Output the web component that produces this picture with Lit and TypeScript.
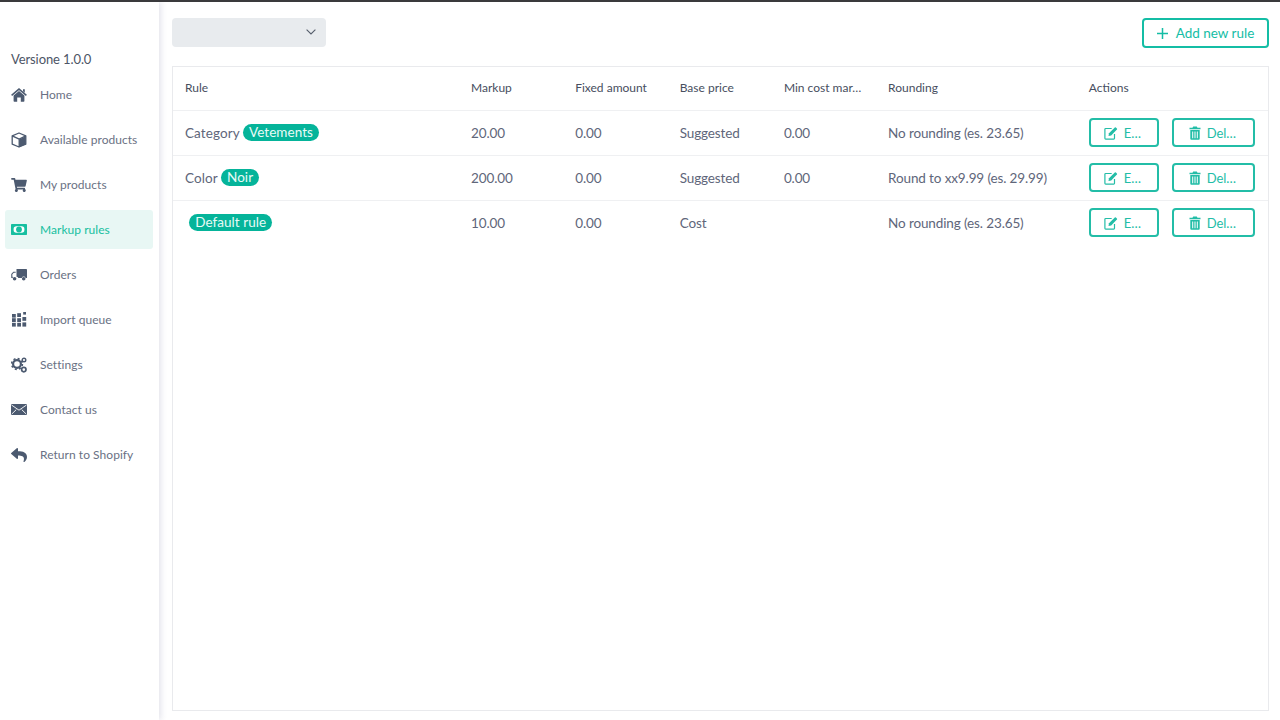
import { LitElement, html, css, svg } from "lit";
import { customElement } from "lit/decorators.js";

const icons: Record<string, unknown> = {
  home: svg`<svg viewBox="0 0 16 14" width="16" height="14"><path d="M.6 7.4 8 1.100l7.400 6.300" fill="none" stroke="currentColor" stroke-width="1.500"/><path d="M12 1.200h1.800v3.600L12 3.300zM2.600 7.600 8 3l5.400 4.600V13a.7.7 0 0 1-.7.700H9.800V9.600H6.200v4.100H3.300a.7.7 0 0 1-.7-.7z" fill="currentColor"/></svg>`,
  cube: svg`<svg viewBox="0 0 16 16" width="16" height="16"><path d="M8.200 7.400 14.800 4.200v8L8.200 15.200z" fill="currentColor"/><path d="M1.200 3.800 8 1l6.800 2.800v8.400L8 15 1.200 12.200zM1.200 3.800 8.200 7.200 14.800 3.800M8.200 7.200V15" fill="none" stroke="currentColor" stroke-width="1.300" stroke-linejoin="round"/></svg>`,
  cart: svg`<svg viewBox="0 0 576 512" width="16" height="14"><path fill="currentColor" d="M528.12 301.319l47.273-208C578.806 78.301 567.391 64 551.99 64H159.208l-9.166-44.81C147.758 8.021 137.93 0 126.529 0H24C10.745 0 0 10.745 0 24v16c0 13.255 10.745 24 24 24h69.883l70.248 343.435C147.325 417.1 136 435.222 136 456c0 30.928 25.072 56 56 56s56-25.072 56-56c0-15.674-6.447-29.835-16.824-40h209.647C430.447 426.165 424 440.326 424 456c0 30.928 25.072 56 56 56s56-25.072 56-56c0-22.172-12.888-41.332-31.579-50.405l5.517-24.276c3.413-15.018-8.002-29.319-23.403-29.319H218.117l-6.545-32h293.145c11.206 0 20.92-7.754 23.403-18.681z"/></svg>`,
  money: svg`<svg viewBox="0 0 16 11" width="16" height="11"><rect width="16" height="11" rx=".7" fill="currentColor"/><rect x="2.600" y="2.200" width="10.800" height="6.600" rx="2.800" fill="#fff"/><circle cx="8" cy="5.500" r="2.900" fill="currentColor"/></svg>`,
  truck: svg`<svg viewBox="0 0 16 14" width="16" height="14"><path fill="currentColor" d="M5.500 1h9.700a.8.800 0 0 1 .8.800V10h-1.400a2 2 0 0 0-3.800 0H7.300a2 2 0 0 0-1.800-1.300z"/><path fill="none" stroke="currentColor" stroke-width="1.100" d="M4.700 4.200H2.600L.8 6.200v3.200h1"/><circle cx="3.600" cy="10.800" r="1.800" fill="currentColor"/><circle cx="12.700" cy="10.800" r="1.800" fill="currentColor"/></svg>`,
  grid: svg`<svg viewBox="0 0 15 15" width="15" height="15" fill="currentColor"><rect x="0" y="2" width="3.800" height="3.600"/><rect x="5.200" y="1.200" width="3.800" height="3.800"/><rect x="11.200" y="0" width="2.800" height="2.600"/><rect x="0" y="6.200" width="3.800" height="3.800"/><rect x="5.200" y="6.200" width="3.800" height="3.800"/><rect x="10.400" y="5" width="3.800" height="3.800"/><rect x="0" y="10.800" width="3.800" height="3.800"/><rect x="5.200" y="10.800" width="3.800" height="3.800"/><rect x="10.400" y="10.400" width="3.800" height="4.200"/></svg>`,
  cogs: svg`<svg viewBox="0 0 16 16" width="16" height="16"><circle cx="6" cy="7" r="3.900" fill="none" stroke="currentColor" stroke-width="2.200"/><circle cx="6" cy="7" r="5.400" fill="none" stroke="currentColor" stroke-width="1.600" stroke-dasharray="2 2.240"/><circle cx="13" cy="3" r="1.800" fill="none" stroke="currentColor" stroke-width="1.400"/><circle cx="12.800" cy="12.600" r="2.200" fill="none" stroke="currentColor" stroke-width="1.700"/></svg>`,
  mail: svg`<svg viewBox="0 0 16 11" width="16" height="11"><rect width="16" height="11" rx=".8" fill="currentColor"/><path d="M.5 1 8 6.200 15.500 1M.8 10l4.500-4.400M15.200 10l-4.500-4.400" fill="none" stroke="#fff" stroke-width=".9"/></svg>`,
  reply: svg`<svg viewBox="0 0 512 512" width="16" height="16"><path fill="currentColor" d="M8.309 189.836L184.313 37.851C199.719 24.546 224 35.347 224 56.015v80.053c160.629 1.839 288 34.032 288 186.258 0 61.441-39.581 122.309-83.333 154.132-13.653 9.931-33.111-2.533-28.077-18.631 45.344-145.012-21.507-183.51-176.59-185.742V360c0 20.7-24.3 31.453-39.687 18.164l-176.004-152c-11.071-9.562-11.086-26.753 0-36.328z"/></svg>`,
};

const editIcon = svg`<svg viewBox="0 0 14 14" width="14" height="14"><path d="M10.500 8v4.300a.8.800 0 0 1-.8.800H1.700a.8.800 0 0 1-.8-.8V3.300a.8.800 0 0 1 .8-.8h6" fill="none" stroke="currentColor" stroke-width="1.200"/><path d="M4.500 10 5 7.300 10.800 1.500a.8.800 0 0 1 1.100 0l1 1a.8.800 0 0 1 0 1.100L7.200 9.500z" fill="currentColor"/></svg>`;
const trashIcon = svg`<svg viewBox="0 0 12 14" width="12" height="14"><path fill="currentColor" fill-rule="evenodd" d="M4.200.4h3.600l.7 1.300h3v1.500H.5V1.700h3zM1.300 4h9.400v8.800a1 1 0 0 1-1 1H2.300a1 1 0 0 1-1-1zM3.200 5.500v6.800h1V5.500zM5.500 5.500v6.800h1V5.500zM7.800 5.500v6.800h1V5.500z"/></svg>`;

const nav = [
  ["home", "Home"],
  ["cube", "Available products"],
  ["cart", "My products"],
  ["money", "Markup rules"],
  ["truck", "Orders"],
  ["grid", "Import queue"],
  ["cogs", "Settings"],
  ["mail", "Contact us"],
  ["reply", "Return to Shopify"],
];

const rows = [
  ["Category", "Vetements", "20.00", "0.00", "Suggested", "0.00", "No rounding (es. 23.65)"],
  ["Color", "Noir", "200.00", "0.00", "Suggested", "0.00", "Round to xx9.99 (es. 29.99)"],
  ["", "Default rule", "10.00", "0.00", "Cost", "", "No rounding (es. 23.65)"],
];

@customElement("app-root")
export class AppRoot extends LitElement {
  static styles = css`
    :host {
      display: flex;
      height: 720px;
      box-sizing: border-box;
      border-top: 2px solid #3a3a3c;
      font-family: "Lato", "Open Sans", sans-serif;
      background: #fff;
      overflow: hidden;
    }
    .side {
      width: 159px;
      flex: none;
      box-sizing: border-box;
      padding: 49px 6px 0 5px;
      box-shadow: 2px 0 6px rgba(60, 60, 110, 0.14);
    }
    .version {
      font-size: 13px;
      line-height: 16px;
      color: #4d5566;
      padding-left: 6px;
      margin-bottom: 8px;
      letter-spacing: -0.1px;
    }
    .nav {
      display: flex;
      flex-direction: column;
      gap: 6px;
    }
    .item {
      height: 39px;
      display: flex;
      align-items: center;
      border-radius: 3px;
      font-size: 12px;
      color: #6a7184;
      letter-spacing: 0.04px;
    }
    .item .ic {
      width: 16px;
      margin: 0 13px 0 6px;
      display: flex;
      justify-content: center;
      color: #4c5a70;
    }
    .item.on {
      background: #e8f7f4;
      color: #16bfa0;
    }
    .item.on .ic {
      color: #16bfa0;
    }
    .main {
      flex: 1;
      min-width: 0;
      display: flex;
      flex-direction: column;
      padding: 16px 11px 9px 13px;
    }
    .top {
      display: flex;
      justify-content: space-between;
      align-items: flex-start;
      margin-bottom: 18px;
    }
    .select {
      width: 154px;
      height: 28.5px;
      box-sizing: border-box;
      background: #e8ebee;
      border-radius: 4px;
      display: flex;
      align-items: center;
      justify-content: flex-end;
      padding-right: 10px;
      color: #555d6b;
    }
    .add {
      width: 127px;
      height: 30px;
      box-sizing: border-box;
      border: 2px solid #14bda5;
      border-radius: 4px;
      color: #14bda5;
      display: flex;
      align-items: center;
      justify-content: center;
      gap: 8px;
      font-size: 13.5px;
    }
    .table {
      flex: 1;
      border: 1px solid #e9eaed;
      box-sizing: border-box;
    }
    .row {
      display: grid;
      grid-template-columns: 286px 104.2px 104.5px 104.2px 104.2px 200.8px 1fr;
      height: 45px;
      padding-bottom: 1px;
      align-items: center;
      border-bottom: 1px solid #eff0f2;
      box-sizing: border-box;
      font-size: 13.5px;
      color: #60667a;
      letter-spacing: -0.12px;
    }
    .row.head {
      height: 44px;
      padding-bottom: 3px;
      font-size: 12px;
      color: #474e5e;
      letter-spacing: 0;
    }
    .row > div {
      padding-left: 12px;
      white-space: nowrap;
    }
    .row.last {
      border-bottom-color: transparent;
    }
    .rule {
      display: flex;
      align-items: center;
      gap: 3px;
      letter-spacing: 0.1px;
    }
    .pill {
      background: #05b49a;
      color: #e9fbf7;
      border-radius: 9px;
      height: 17.5px;
      line-height: 17.5px;
      padding: 0 6.2px;
      letter-spacing: 0.05px;
    }
    .pill.solo {
      margin-left: 4px;
    }
    .row > .actions {
      display: flex;
      gap: 13px;
    }
    .btn {
      height: 29px;
      box-sizing: border-box;
      border: 2px solid #23bda7;
      border-radius: 4px;
      display: flex;
      align-items: center;
      color: #23bda7;
      gap: 6px;
      padding-left: 13px;
      font-size: 13px;
    }
    .btn.edit {
      width: 70px;
    }
    .btn.del {
      width: 83px;
      padding-left: 15px;
    }
  `;

  render() {
    return html`
      <aside class="side">
        <div class="version">Versione 1.0.0</div>
        <nav class="nav">
          ${nav.map(
            ([ic, label]) => html`<div class="item ${label === "Markup rules" ? "on" : ""}">
              <span class="ic">${icons[ic]}</span><span>${label}</span>
            </div>`
          )}
        </nav>
      </aside>
      <main class="main">
        <div class="top">
          <div class="select">
            <svg viewBox="0 0 10 6" width="10" height="6"><path d="M.6.6 5 5 9.400.6" fill="none" stroke="currentColor" stroke-width="1.100"/></svg>
          </div>
          <div class="add">
            <svg viewBox="0 0 11 11" width="11" height="11"><path d="M5.500 0v11M0 5.500h11" stroke="currentColor" stroke-width="1.500"/></svg>
            <span>Add new rule</span>
          </div>
        </div>
        <section class="table">
          <div class="row head">
            <div>Rule</div><div>Markup</div><div>Fixed amount</div><div>Base price</div>
            <div>Min cost mar…</div><div>Rounding</div><div>Actions</div>
          </div>
          ${rows.map(
            (r, i) => html`<div class="row ${i === 2 ? "last" : ""}">
              <div class="rule">
                ${r[0] ? html`<span>${r[0]}</span>` : ""}
                <span class="pill ${r[0] ? "" : "solo"}">${r[1]}</span>
              </div>
              <div>${r[2]}</div><div>${r[3]}</div><div>${r[4]}</div><div>${r[5]}</div><div>${r[6]}</div>
              <div class="actions">
                <div class="btn edit">${editIcon}<span>E…</span></div>
                <div class="btn del">${trashIcon}<span>Del…</span></div>
              </div>
            </div>`
          )}
        </section>
      </main>
    `;
  }
}
